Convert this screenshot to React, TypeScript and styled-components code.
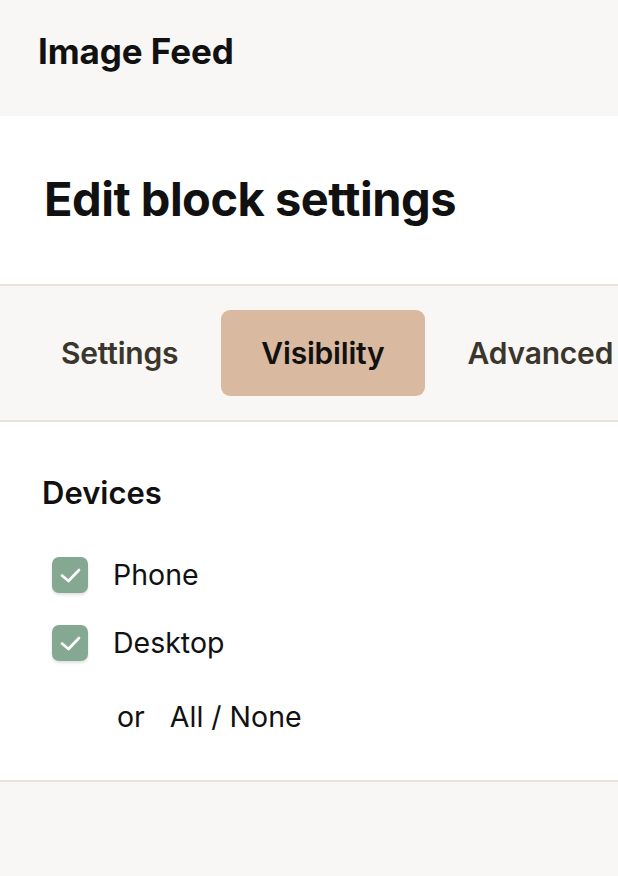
import React, { useState } from "react";
import styled, { createGlobalStyle } from "styled-components";

const Global = createGlobalStyle`
  html, body { margin: 0; padding: 0; background: #f8f7f5; }
  body { font-family: Inter, "Noto Sans", sans-serif; color: #111; -webkit-font-smoothing: antialiased; }
`;

const Page = styled.div`
  display: flex;
  flex-direction: column;
  min-height: 876px;
  background: #f8f7f5;
`;

const TopBar = styled.header`
  height: 116px;
  box-sizing: border-box;
  padding: 30px 0 0 38px;
  background: #f8f7f5;
`;

const AppTitle = styled.h1`
  margin: 0;
  font-size: 35px;
  font-weight: 700;
  line-height: 42px;
  letter-spacing: -0.1px;
  color: #111;
`;

const Sheet = styled.section`
  background: #fff;
  border-bottom: 2px solid #e7e4de;
`;

const SheetHeader = styled.div`
  height: 170px;
  box-sizing: border-box;
  padding: 56px 0 0 44px;
  border-bottom: 2px solid #e7e4de;
`;

const SheetTitle = styled.h2`
  margin: 0;
  font-size: 47px;
  font-weight: 700;
  line-height: 54px;
  letter-spacing: -0.5px;
  color: #111;
`;

const Tabs = styled.nav`
  display: flex;
  align-items: center;
  gap: 3px;
  height: 136px;
  box-sizing: border-box;
  padding: 0 0 0 21px;
  background: #f8f7f5;
  border-bottom: 2px solid #e7e4de;
  overflow: hidden;
`;

const Tab = styled.button<{ $active?: boolean }>`
  flex: none;
  height: 86px;
  padding: 0 40px;
  border: none;
  border-radius: 9px;
  font-family: inherit;
  font-size: 30px;
  font-weight: 600;
  letter-spacing: -0.2px;
  color: ${(p) => (p.$active ? "#111" : "#3b362c")};
  background: ${(p) => (p.$active ? "#d9b99f" : "transparent")};
  cursor: pointer;
`;

const Body = styled.div`
  padding: 54px 0 45px 42px;
`;

const SectionTitle = styled.h3`
  margin: 0 0 47px;
  font-size: 31px;
  font-weight: 600;
  line-height: 34px;
  color: #111;
`;

const Options = styled.div`
  display: flex;
  flex-direction: column;
  gap: 32px;
  padding-left: 10px;
`;

const OptionRow = styled.label`
  display: flex;
  align-items: center;
  gap: 25px;
  font-size: 28.5px;
  line-height: 36px;
  color: #111;
  cursor: pointer;
`;

const Box = styled.span<{ $on: boolean }>`
  flex: none;
  width: 36px;
  height: 36px;
  border-radius: 7px;
  display: block;
  background: ${(p) => (p.$on ? "#84a892" : "#fff")};
  box-shadow: 0 2px 3px rgba(0, 0, 0, 0.12);

  svg {
    display: block;
  }
`;

const Shortcut = styled.div`
  display: flex;
  gap: 25px;
  margin-top: 38px;
  padding-left: 75px;
  font-size: 28.5px;
  line-height: 36px;
  color: #111;
`;

const LinkText = styled.span`
  cursor: pointer;
`;

const Footer = styled.div`
  flex: 1;
  background: #f8f7f5;
`;

function Check() {
  return (
    <svg width="36" height="36" viewBox="0 0 36 36" fill="none">
      <path d="M10 18.5L16.5 24L27 13" stroke="#fff" strokeWidth="2.7" strokeLinecap="round" strokeLinejoin="round" />
    </svg>
  );
}

export default function App() {
  const [devices, setDevices] = useState({ Phone: true, Desktop: true });
  const toggle = (k: keyof typeof devices) => setDevices((d) => ({ ...d, [k]: !d[k] }));
  const setAll = (v: boolean) => setDevices({ Phone: v, Desktop: v });
  return (
    <Page>
      <Global />
      <TopBar>
        <AppTitle>Image Feed</AppTitle>
      </TopBar>
      <Sheet>
        <SheetHeader>
          <SheetTitle>Edit block settings</SheetTitle>
        </SheetHeader>
        <Tabs>
          <Tab>Settings</Tab>
          <Tab $active>Visibility</Tab>
          <Tab>Advanced</Tab>
        </Tabs>
        <Body>
          <SectionTitle>Devices</SectionTitle>
          <Options>
            {(Object.keys(devices) as (keyof typeof devices)[]).map((k) => (
              <OptionRow key={k} onClick={() => toggle(k)}>
                <Box $on={devices[k]}>{devices[k] && <Check />}</Box>
                {k}
              </OptionRow>
            ))}
          </Options>
          <Shortcut>
            <span>or</span>
            <span>
              <LinkText onClick={() => setAll(true)}>All</LinkText> /{" "}
              <LinkText onClick={() => setAll(false)}>None</LinkText>
            </span>
          </Shortcut>
        </Body>
      </Sheet>
      <Footer />
    </Page>
  );
}
